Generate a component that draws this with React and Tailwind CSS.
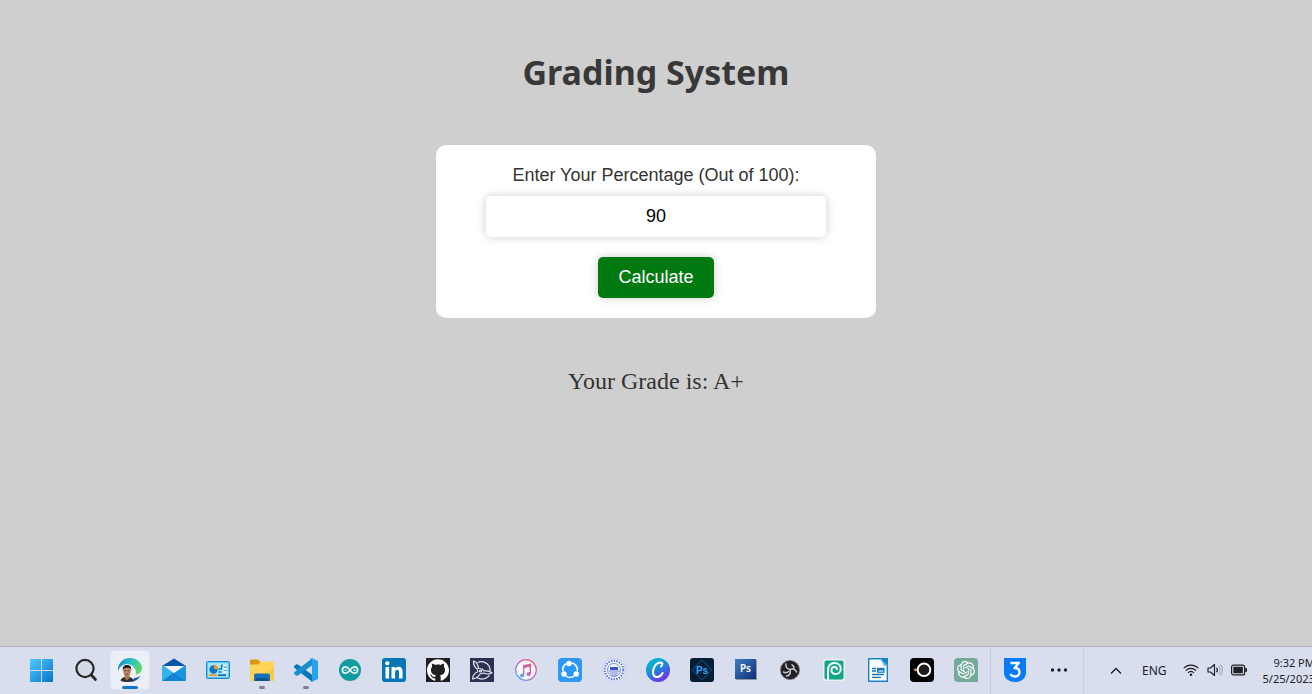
import { useState } from "react";
import { SiOpenai, SiGithub } from "react-icons/si";

const svgProps = { viewBox: "0 0 24 24", width: 24, height: 24, "aria-hidden": true };

function WindowsIcon() {
  return (
    <svg {...svgProps}>
      <defs>
        <linearGradient id="win" x1="0" y1="0" x2="1" y2="1">
          <stop offset="0" stopColor="#4ccdfb" />
          <stop offset="1" stopColor="#0673d0" />
        </linearGradient>
      </defs>
      <path fill="url(#win)" d="M0 1h11v11H0zM12 1h11v11H12zM0 13h11v11H0zM12 13h11v11H12z" />
    </svg>
  );
}

function SearchIcon() {
  return (
    <svg {...svgProps} fill="none" stroke="#262626">
      <circle cx="11" cy="10.500" r="8.600" strokeWidth="2.200" fill="#d5dae8" />
      <path d="M17.300 17L21.500 21.500" strokeWidth="2.700" strokeLinecap="round" />
    </svg>
  );
}

function EdgeIcon() {
  return (
    <svg {...svgProps}>
      <defs>
        <linearGradient id="edge" x1="0" y1=".3" x2="1" y2=".6">
          <stop offset="0" stopColor="#168bd2" />
          <stop offset=".5" stopColor="#2ec3c4" />
          <stop offset="1" stopColor="#65dc62" />
        </linearGradient>
      </defs>
      <path fill="url(#edge)" d="M0 10C1 4 6 0 12 0c7 0 12 5 12 10 0 4-3 6.500-7 6.500L10 13 0 16z" />
      <path fill="#0d5aa8" d="M14 20c3 .5 6-.4 8.500-2.500C21 21 17 24 12 24z" />
      <circle cx="9" cy="15" r="9" fill="#f4f3f2" />
      <path fill="#30302f" d="M2.500 23c.5-3 2.500-3.600 4.500-4h4c2 .4 4 1 4.500 4-4 1.500-9 1.500-13 0z" />
      <path fill="#a87354" d="M6.500 17h5v3.200L9 22.500 6.500 20z" />
      <ellipse cx="9" cy="13.500" rx="3.700" ry="5" fill="#bb8566" />
      <path fill="#1d1a1a" d="M4.900 13c-.6-4 1-6 4.100-6s4.800 2 4.100 6l-1-2.800C10 9.600 8 9.600 5.900 10.400z" />
      <path stroke="#473028" strokeWidth=".8" d="M6.500 12.800h1.700M9.900 12.800h1.700M7.700 16.300h2.600" />
    </svg>
  );
}

function MailIcon() {
  return (
    <svg {...svgProps}>
      <path fill="#33b5e9" d="M0 8v15h24V8z" />
      <path fill="#1382d6" d="M0 23l12-8.500L24 23z" />
      <path fill="#1c93de" d="M24 8v15L12 14.500z" />
      <path fill="#0757a9" d="M0 8L12 .5 24 8z" />
      <path fill="#f7f7f7" d="M2 8h20l-10 7z" />
    </svg>
  );
}

function ControlPanelIcon() {
  return (
    <svg {...svgProps}>
      <rect x=".5" y="3.500" width="23" height="17" rx="1" fill="#60c8f3" stroke="#168bcd" />
      <rect x="2" y="5" width="20" height="14" fill="#a5e6fb" />
      <circle cx="7.500" cy="11.500" r="4.200" fill="#1076c9" />
      <path fill="#f59523" d="M8 11V6.500A4.500 4.500 0 0112 11z" />
      <path stroke="#f3932a" strokeWidth="1.800" d="M3 17.200h8" />
      <path stroke="#156cb1" strokeWidth="1.800" d="M12 17.200h8" />
      <path fill="none" stroke="#137bc3" strokeWidth="1.300" d="M12.500 11h3V7.500H17M12.500 14h3" />
      <path stroke="#fff" strokeWidth="1.500" d="M17.500 7.500h3M17.500 11h3M17.500 14h3" />
      <path stroke="#157bc1" strokeWidth="1.200" d="M18.500 9h2M18.500 12.500h2" />
    </svg>
  );
}

function FolderIcon() {
  return (
    <svg {...svgProps}>
      <path fill="#d99810" d="M0 3a1.500 1.500 0 011.500-1.500h6.500L10.500 4H22v5H0z" />
      <path fill="#ffd45a" d="M0 6.500h8.500L11 3.500h11.500A1.500 1.500 0 0124 5v16.500a1.500 1.500 0 01-1.500 1.500h-21A1.500 1.500 0 010 21.500z" />
      <path fill="#f7bd2e" opacity=".5" d="M24 10v13H0z" />
      <path fill="#1671bd" d="M4 23v-5.500a2 2 0 012-2h12a2 2 0 012 2V23z" />
      <path fill="#0b548f" d="M6.500 20h11l1.500 3H5z" />
    </svg>
  );
}

function CodeIcon() {
  return (
    <svg {...svgProps}>
      <path fill="#0877b9" d="M0 8.300l2.200-2 1.800.1L18.500 17v7L.2 9.700z" />
      <path fill="#168fd0" d="M0 15.700l2.200 2 1.800-.1L18.500 7V0L.2 14.300z" />
      <path fill="#28a2ee" d="M17.500 0L24 3v18l-6.500 3-1-.8 1.500-1V2L16.500.8z" />
    </svg>
  );
}

function ArduinoIcon() {
  return (
    <svg {...svgProps} fill="none">
      <circle cx="12" cy="12" r="11" fill="#129c9e" />
      <path stroke="#e8f8f7" strokeWidth="1.700" d="M12 12c-1.500-2.200-2.800-3.200-4.400-3.200a3.200 3.200 0 000 6.400c1.600 0 2.900-1 4.400-3.200s2.800-3.200 4.400-3.200a3.200 3.200 0 010 6.400c-1.600 0-2.900-1-4.400-3.200z" />
      <path stroke="#e8f8f7" strokeWidth=".9" d="M6.500 12h2.200M15.300 12h2.200M16.400 10.900v2.200" />
    </svg>
  );
}

function LinkedInIcon() {
  return (
    <svg {...svgProps}>
      <rect width="24" height="24" rx="3" fill="#0676b4" />
      <circle cx="5.300" cy="5.300" r="2.100" fill="#fff" />
      <path fill="#fff" d="M3.500 9h3.600v11.500H3.500zM9.500 9h3.400v1.600c.7-1.200 1.900-1.900 3.500-1.900 3.300 0 4.200 2.100 4.200 5.100v6.700H17v-6c0-1.500-.1-2.800-1.800-2.800s-2.100 1.300-2.100 2.700v6.100H9.500z" />
    </svg>
  );
}

function GithubIcon() {
  return (
    <span className="flex size-6 items-center justify-center bg-[#211f1f]">
      <SiGithub size={22} color="#fff" aria-hidden="true" />
    </span>
  );
}

function TriadIcon() {
  return (
    <svg {...svgProps} fill="none" stroke="#e5e8f0" strokeWidth="1.200" strokeLinejoin="round">
      <path stroke="none" fill="#2b3353" d="M0 0h24v24H0z" />
      <path d="M3.500 3c3 1 4.700 4 5 7.500l3.500.5 2 2c3-.3 6 .2 8 1.800-2.500 1.500-5.500 1.500-8.500.2L10 16c-1.500 2.500-4 4.500-7.500 5 .3-3.500 2-6 5.300-7.300l-.6-2.700C4.500 9 3.300 6 3.500 3z" />
      <path d="M7.500 4.500c4.500-2 9.500-.3 11.700 3.700.8 1.700 1 3.300.9 5M19.500 17c-3 4-8 5-13 2.500" />
      <circle cx="10.500" cy="13" r="1" />
    </svg>
  );
}

function MusicIcon() {
  return (
    <svg {...svgProps}>
      <defs>
        <linearGradient id="music" x1="1" y1="0" x2="0" y2="1">
          <stop offset="0" stopColor="#fa5265" />
          <stop offset=".5" stopColor="#c664c9" />
          <stop offset="1" stopColor="#35b9ee" />
        </linearGradient>
      </defs>
      <circle cx="12" cy="12" r="10.300" fill="#f7f7fa" stroke="url(#music)" strokeWidth="1.200" />
      <path fill="url(#music)" d="M9 7.200l8-1.800v10c0 1.700-1.200 2.500-2.500 2.600-1.200 0-1.900-.7-1.900-1.600 0-1.900 2-2 3-2.300V8.800l-5.200 1.100v6.800c0 1.700-1.200 2.500-2.500 2.600-1.200 0-1.900-.7-1.900-1.600 0-1.900 2-2 3-2.300z" />
    </svg>
  );
}

function ShareIcon() {
  return (
    <svg {...svgProps} fill="none" stroke="#fff" strokeWidth="1.600">
      <rect width="24" height="24" rx="4" fill="#2c98fa" stroke="none" />
      <path d="M13.500 4.800a7.300 7.300 0 015.800 8.400M16 18.200a7.300 7.300 0 01-8 0M4.900 13.200a7.300 7.300 0 013.300-7.400" />
      <g fill="#fff" stroke="none">
        <circle cx="11" cy="5.500" r="2.700" />
        <circle cx="6" cy="16" r="2.700" />
        <circle cx="18.200" cy="16" r="2.700" />
      </g>
    </svg>
  );
}

function SealIcon() {
  return (
    <svg {...svgProps} fill="none" stroke="#5871da">
      <circle cx="12" cy="12" r="11.500" fill="#f5f7ff" stroke="#b4c0f2" strokeWidth=".8" />
      <circle cx="12" cy="12" r="9.300" strokeWidth="2" strokeDasharray="1.500 1.200" />
      <circle cx="12" cy="12" r="6.500" strokeWidth=".8" />
      <path fill="#3856c9" stroke="none" d="M8 9h8v3H8z" />
      <path strokeWidth=".9" d="M6.500 13h11M8 15h8M9 17h6" />
    </svg>
  );
}

function CanvaIcon() {
  return (
    <svg {...svgProps}>
      <defs>
        <linearGradient id="canva" x1=".1" y1="0" x2=".75" y2="1">
          <stop offset="0" stopColor="#05c5c8" />
          <stop offset=".45" stopColor="#168fda" />
          <stop offset="1" stopColor="#7526ed" />
        </linearGradient>
      </defs>
      <circle cx="12" cy="12" r="12" fill="url(#canva)" />
      <path fill="none" stroke="#fff" strokeWidth="2.100" strokeLinecap="round" d="M15 8.500c2-2 1.700-4-.5-4-4.700 0-7.500 5.500-7.500 9.500 0 3 1.500 5 4 5 2.300 0 4.300-1.500 5.600-4" />
    </svg>
  );
}

function PsExpressIcon() {
  return (
    <svg {...svgProps}>
      <rect width="24" height="24" rx="3" fill="#031e35" />
      <rect x="5" y="5" width="14" height="14" rx="1" transform="rotate(45 12 12)" fill="none" stroke="#245f94" strokeWidth=".8" />
      <text x="12" y="15.500" textAnchor="middle" className="fill-[#36a5fa] font-['Liberation_Sans',sans-serif] text-[10px] font-bold">Ps</text>
    </svg>
  );
}

function PsIcon() {
  return (
    <svg {...svgProps}>
      <defs>
        <linearGradient id="ps" x1="0" y1="0" x2="1" y2="1">
          <stop offset="0" stopColor="#407fc5" />
          <stop offset="1" stopColor="#102d75" />
        </linearGradient>
      </defs>
      <path fill="#9096a4" d="M2 2h21v20H2z" />
      <path fill="url(#ps)" d="M1 1h21v20H1z" />
      <text x="11.500" y="14" textAnchor="middle" className="fill-white font-['Noto_Sans',sans-serif] text-[10px] font-semibold">Ps</text>
    </svg>
  );
}

function ObsIcon() {
  return (
    <svg {...svgProps} fill="none" stroke="#c9c9ce" strokeLinecap="round">
      <circle cx="12" cy="12" r="9.600" fill="#232126" stroke="#77777d" strokeWidth=".8" />
      <path strokeWidth="1.500" d="M8 6c-.5 2.700.8 4.700 4 5.500M18.500 14c-1-2.800-3.700-3.700-6.500-2.500M8.500 18c2.800 0 4.500-2.500 3.500-6.500M5.500 14c1.700 1 3.500.9 5-.5M14 6.800c1.700 1 2.300 2.300 2 4" />
    </svg>
  );
}

function SwirlIcon() {
  return (
    <svg {...svgProps}>
      <rect x="1" y="1" width="22" height="22" rx="3" fill="#f1eeec" />
      <rect x="2.500" y="2.500" width="19" height="19" rx="2" fill="#11a58a" />
      <path fill="none" stroke="#f7fffd" strokeWidth="2" strokeLinecap="round" d="M6 21.500V12c0-4.500 2.800-7 6.500-7 4 0 6.300 2.500 6.300 5.800 0 3.200-2.300 5.200-5.100 5.200-2.500 0-4.300-1.600-4.300-3.700 0-2 1.300-3.200 3-3.200 1.500 0 2.500.9 2.500 2.200" />
    </svg>
  );
}

function WriterIcon() {
  return (
    <svg {...svgProps}>
      <path fill="#fff" stroke="#1685c8" strokeWidth="1.400" d="M2.700.8H15l6.300 6.500v16H2.700z" />
      <path fill="#1685c8" d="M14 0h8v8z" />
      <path fill="#68b8e6" d="M14 0l8 8h-4z" />
      <path stroke="#1277b8" strokeWidth="1.300" d="M6 10.500h4M6 13h4M6 16.500h12M6 19.300h9" />
      <path fill="#1277b8" d="M11 9.800h7.500v5H11z" />
      <path fill="#b9e2f7" d="M12 13.800l2-2 1.300 1 1-1 1.300 2z" />
    </svg>
  );
}

function LensIcon() {
  return (
    <svg {...svgProps}>
      <rect width="24" height="24" rx="4" fill="#030303" />
      <circle cx="14" cy="11.800" r="6.300" fill="#1c1c1c" stroke="#fff" strokeWidth="2" />
      <path fill="#c96a4a" d="M3 11.800l3.200-2v4z" />
      <circle cx="6" cy="11.800" r="1" fill="#ddb3a4" />
    </svg>
  );
}

function OpenAiIcon() {
  return (
    <span className="flex size-6 items-center justify-center rounded-l rounded-tr bg-[#75a99a]">
      <SiOpenai size={18} color="#fff" aria-hidden="true" />
    </span>
  );
}

function ShieldThreeIcon() {
  return (
    <svg {...svgProps}>
      <path fill="#087bfb" d="M1 0h22v14.500C23 20.500 18 24 12 24S1 20.500 1 14.500z" />
      <path fill="none" stroke="#fff" strokeWidth="2.300" strokeLinejoin="round" d="M7.500 5h8.300l-4.300 5c3.300 0 5 1.600 5 4.200s-2 4.300-4.500 4.300c-2 0-3.600-.7-4.800-2.200" />
    </svg>
  );
}

function MoreIcon() {
  return (
    <svg {...svgProps} fill="#1d1e22">
      <circle cx="5.500" cy="12" r="1.700" />
      <circle cx="12" cy="12" r="1.700" />
      <circle cx="18.500" cy="12" r="1.700" />
    </svg>
  );
}

const pinned = [
  { label: "Start", Icon: WindowsIcon },
  { label: "Search", Icon: SearchIcon },
  { label: "Microsoft Edge", Icon: EdgeIcon, active: true },
  { label: "Mail", Icon: MailIcon },
  { label: "Control Panel", Icon: ControlPanelIcon },
  { label: "File Explorer", Icon: FolderIcon, running: true },
  { label: "Visual Studio Code", Icon: CodeIcon, running: true },
  { label: "Arduino IDE", Icon: ArduinoIcon },
  { label: "LinkedIn", Icon: LinkedInIcon },
  { label: "GitHub", Icon: GithubIcon },
  { label: "Simulator", Icon: TriadIcon },
  { label: "iTunes", Icon: MusicIcon },
  { label: "SHAREit", Icon: ShareIcon },
  { label: "University portal", Icon: SealIcon },
  { label: "Canva", Icon: CanvaIcon },
  { label: "Photoshop Express", Icon: PsExpressIcon },
  { label: "Photoshop", Icon: PsIcon },
  { label: "OBS Studio", Icon: ObsIcon },
  { label: "Photopea", Icon: SwirlIcon },
  { label: "LibreOffice Writer", Icon: WriterIcon },
  { label: "Camera", Icon: LensIcon },
  { label: "ChatGPT", Icon: OpenAiIcon },
];

const extra = [
  { label: "CSS reference", Icon: ShieldThreeIcon },
  { label: "More", Icon: MoreIcon },
];

function TaskButton({ label, Icon, active, running }) {
  return (
    <button type="button" aria-label={label} className="flex h-full w-11 shrink-0 items-center justify-center pb-px">
      <span className={active ? "relative flex size-[38px] items-center justify-center rounded bg-[#eceff8] ring-1 ring-[#e1e4ef]" : "relative flex size-[38px] items-center justify-center"}>
        <Icon />
        {active && <span className="absolute bottom-0 h-[3px] w-4 rounded-full bg-[#0b76cf]" />}
        {running && <span className="absolute bottom-0 h-[3px] w-1.5 rounded-full bg-[#80838c]" />}
      </span>
    </button>
  );
}

function Separator() {
  return <span className="mx-0.5 h-full w-px shrink-0 bg-[#c9cedf]" />;
}

function Tray() {
  return (
    <div className="flex h-full shrink-0 items-center gap-4 pl-2 font-['Noto_Sans',sans-serif] text-[#202126]">
      <button type="button" aria-label="Show hidden icons" className="flex h-full w-7 items-center justify-end">
        <svg viewBox="0 0 12 12" width="12" height="12" fill="none" stroke="currentColor" strokeWidth="1.400" aria-hidden="true">
          <path d="M1 8.500l5-5 5 5" />
        </svg>
      </button>
      <button type="button" className="h-full pl-1 text-[12px]">ENG</button>
      <button type="button" aria-label="Network, volume and battery" className="flex h-full items-center gap-2 pb-px">
        <svg viewBox="0 0 16 16" width="16" height="16" fill="none" stroke="currentColor" strokeWidth="1.200" aria-hidden="true">
          <path d="M.7 6.200c4-4.200 10.600-4.200 14.600 0M2.900 8.600c2.900-3 7.300-3 10.200 0M5 10.900c1.800-1.800 4.200-1.800 6 0" />
          <circle cx="8" cy="12.800" r="1.300" fill="currentColor" stroke="none" />
        </svg>
        <svg viewBox="0 0 16 16" width="16" height="16" fill="none" stroke="currentColor" strokeWidth="1.200" strokeLinejoin="round" aria-hidden="true">
          <path d="M1 6h2.500L7.500 2.500v11L3.500 10H1zM9.500 5.800c1.100 1.300 1.100 3.100 0 4.400" />
          <path stroke="#a8acb8" d="M11.500 4c2 2.300 2 5.700 0 8M13.500 2.500c2.500 3 2.500 8 0 11" />
        </svg>
        <svg viewBox="0 0 16 16" width="16" height="16" aria-hidden="true">
          <rect x=".6" y="3.100" width="13" height="9.800" rx="2" fill="none" stroke="currentColor" strokeWidth="1.200" />
          <rect x="2.300" y="4.800" width="9.600" height="6.400" rx=".7" fill="currentColor" />
          <path d="M14.200 6h.8a1 1 0 011 1v2a1 1 0 01-1 1h-.8z" fill="currentColor" />
        </svg>
      </button>
      <button type="button" className="h-full text-right text-[11px] leading-4 whitespace-nowrap">
        <span className="block">9:32 PM</span>
        <span className="block">5/25/2023</span>
      </button>
    </div>
  );
}

function Taskbar() {
  return (
    <footer className="flex h-12 items-center overflow-hidden border-t border-[#afb3c0] bg-[#d8deee] pl-5">
      {pinned.map((item) => (
        <TaskButton key={item.label} {...item} />
      ))}
      <Separator />
      {extra.map((item) => (
        <TaskButton key={item.label} {...item} />
      ))}
      <Separator />
      <Tray />
    </footer>
  );
}

function gradeFor(value) {
  if (value >= 90) return "A+";
  if (value >= 80) return "A";
  if (value >= 70) return "B";
  if (value >= 60) return "C";
  if (value >= 50) return "D";
  return "F";
}

export default function App() {
  const [percentage, setPercentage] = useState("90");
  const [grade, setGrade] = useState("A+");

  const handleSubmit = (event) => {
    event.preventDefault();
    setGrade(gradeFor(Number(percentage)));
  };

  return (
    <div className="flex min-h-screen flex-col bg-[#cfcfcf] text-[#333]">
      <main className="flex flex-1 flex-col items-center px-4 pt-12">
        <h1 className="font-['Noto_Sans',sans-serif] text-[34px] leading-[49px] font-bold text-[#383838]">Grading System</h1>
        <form onSubmit={handleSubmit} className="mt-12 flex w-full max-w-[440px] flex-col items-center rounded-[10px] bg-white px-[50px] py-5 font-['Liberation_Sans',sans-serif] text-lg">
          <label htmlFor="percentage" className="leading-[21px]">Enter Your Percentage (Out of 100):</label>
          <input
            id="percentage"
            type="text"
            inputMode="numeric"
            value={percentage}
            onChange={(event) => setPercentage(event.target.value)}
            className="mt-2.5 w-full rounded-[5px] bg-white p-2.5 text-center leading-[21px] text-black shadow-[0_0_10px_rgba(0,0,0,0.2)] outline-none"
          />
          <button type="submit" className="mt-5 rounded-[5px] bg-[#007a10] px-5 py-2.5 leading-[21px] text-white shadow-[0_0_10px_rgba(0,0,0,0.2)]">
            Calculate
          </button>
        </form>
        <p className="mt-12 font-['Liberation_Serif',serif] text-2xl leading-[30px]">Your Grade is: {grade}</p>
      </main>
      <Taskbar />
    </div>
  );
}
